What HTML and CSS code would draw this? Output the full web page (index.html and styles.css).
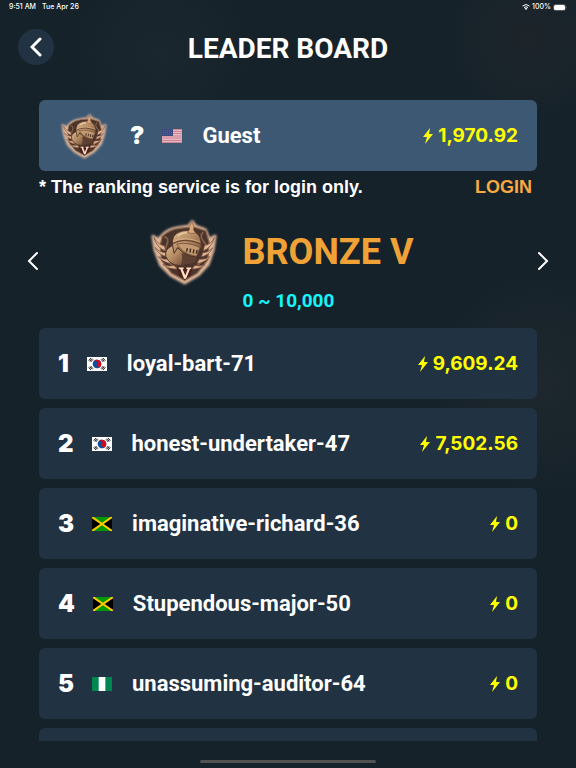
FILE: index.html
```html
<!DOCTYPE html>
<html lang="en">
<head>
    <meta charset="utf-8">
    <meta name="viewport" content="width=device-width, initial-scale=1">
    <title>Leader Board</title>
    <link rel="stylesheet" href="styles.css">
</head>
<body>
    <!-- shared icons -->
    <svg class="defs" width="0" height="0" aria-hidden="true">
        <defs>
            <linearGradient id="metal" x1="0" y1="0" x2="1" y2="1">
                <stop offset="0" stop-color="#d9b58b"/>
                <stop offset="0.5" stop-color="#b18760"/>
                <stop offset="1" stop-color="#6c4935"/>
            </linearGradient>
            <filter id="glow" x="-20%" y="-20%" width="140%" height="140%">
                <feGaussianBlur stdDeviation="4"/>
            </filter>
        </defs>
        <symbol id="badge" viewBox="20 34 212 204">
            <path d="M32 88L48 98 62 84Q80 66 112 62L140 58 151 44 161 58 190 68 202 98 220 88 214 130 200 172 170 205 128 230 86 206 55 175 38 130z" fill="#dcb498" stroke="#dcb498" stroke-width="9" stroke-linejoin="round" filter="url(#glow)"/>
            <path d="M60 88Q85 66 112 64L155 60 192 72 202 105 198 160 166 200 128 222 88 200 58 162 54 115z" fill="#4b342b" stroke="#8f6b53" stroke-width="4"/>
            <path d="M66 90Q80 92 76 108T64 132M184 76Q172 88 184 102T194 126M70 160Q90 178 104 184M188 156Q172 176 154 184" fill="none" stroke="#876047" stroke-width="5"/>
            <path d="M35 92Q42 122 70 133L67 118Q45 112 35 92zM38 122Q48 145 76 151L72 138Q51 137 38 122zM48 150Q62 168 88 171L82 158Q62 160 48 150zM62 174Q78 188 106 188L96 177Q78 181 62 174z" fill="#dfb38d" stroke="#70483a" stroke-width="2"/>
            <path d="M218 92Q211 122 184 133L188 116Q209 112 218 92zM213 123Q204 145 178 151L183 138Q202 137 213 123zM204 150Q191 168 165 171L172 158Q191 160 204 150zM190 174Q175 188 149 188L159 177Q175 181 190 174z" fill="#dfb38d" stroke="#70483a" stroke-width="2"/>
            <path d="M90 117Q66 128 71 150 80 170 100 175L120 178Q140 160 122 132z" fill="url(#metal)" stroke="#513527" stroke-width="3"/>
            <path d="M118 140Q124 160 116 176L139 172 160 168 164 150z" fill="#5e4132"/>
            <path d="M92 119Q84 82 118 73 151 64 169 83 180 97 178 122L165 151Q145 152 122 137L107 122 96 140z" fill="url(#metal)" stroke="#4d3226" stroke-width="3"/>
            <path d="M93 110Q127 91 178 112" fill="none" stroke="#6a4631" stroke-width="4"/>
            <path d="M94 105Q128 86 176 106" fill="none" stroke="#e2bd93" stroke-width="2"/>
            <path d="M104 112Q137 105 174 122L164 149Q142 147 122 132z" fill="#c39a70" stroke="#60402f" stroke-width="2"/>
            <path d="M136 124L134 135M146 126L144 138M156 128L154 140M166 130L163 141" stroke="#36231d" stroke-width="4"/>
            <path d="M109 86Q121 77 139 77" fill="none" stroke="#ebcaa0" stroke-width="5" stroke-linecap="round"/>
            <path d="M136 77L143 67 141 60 150 44 156 59 155 69 161 78Q149 83 136 77z" fill="#d8a77b" stroke="#795139" stroke-width="2"/>
            <path d="M104 184L152 184 146 207 128 221 111 207z" fill="#4d2020"/>
            <path d="M110 183H125V187L122 188 130 207 137 188 133 187V183H148V187L144 188 132 217H126L115 188 110 187z" fill="#ffe3c2"/>
        </symbol>
        <symbol id="bolt" viewBox="0 0 10 16">
            <path d="M7 0L0 9H4L2 16 10 6H6z" fill="#ff0"/>
        </symbol>
        <symbol id="flag-kr" viewBox="0 0 60 42">
            <path d="M0 0H60V42H0z" fill="#fff"/>
            <g transform="rotate(30 30 21)">
                <circle cx="30" cy="21" r="13" fill="#0b4ea2"/>
                <path d="M17 21a13 13 0 0 1 26 0a6 6 0 0 1-13 0a6 6 0 0 0-13 0z" fill="#d00c1a"/>
            </g>
            <path d="M5 11L12 3M8 13L15 5M11 15L18 7M45 5L52 13M42 7L49 15M48 3L55 11M5 31L12 39M8 29L15 37M11 27L18 35M42 35L49 27M45 37L52 29M48 39L55 31" stroke="#222" stroke-width="3"/>
        </symbol>
        <symbol id="flag-jm" viewBox="0 0 60 42">
            <path d="M0 0H60V42H0z" fill="#000"/>
            <path d="M0 0H60L30 21zM0 42H60L30 21z" fill="#090"/>
            <path d="M0 0L60 42M60 0L0 42" stroke="#fc0" stroke-width="6"/>
        </symbol>
        <symbol id="flag-ng" viewBox="0 0 60 42">
            <path d="M0 0H60V42H0z" fill="#008751"/>
            <path d="M20 0H40V42H20z" fill="#fff"/>
        </symbol>
        <symbol id="flag-us" viewBox="0 0 60 42">
            <path d="M0 0H60V42H0z" fill="#edc5cc"/>
            <path d="M0 2H60M0 8H60M0 14H60M0 21H60M0 27H60M0 34H60M0 40H60" stroke="#c97887" stroke-width="3"/>
            <path d="M0 0H33V21H0z" fill="#3d4c80"/>
            <path d="M3 4H32M3 10H32M3 16H32" stroke="#7782a8" stroke-width="2" stroke-dasharray="2 4"/>
        </symbol>
    </svg>

    <div class="screen">
        <div class="status">
            <span>9:51 AM</span>
            <span>Tue Apr 26</span>
            <div class="status-right">
                <svg width="8" height="6" viewBox="0 0 16 12" aria-hidden="true">
                    <path d="M1 4Q8 -2 15 4M4 7Q8 4 12 7" fill="none" stroke="#fff" stroke-width="2"/>
                    <path d="M5 9Q8 7 11 9L8 12z" fill="#fff"/>
                </svg>
                <span>100%</span>
                <svg width="14" height="7" viewBox="0 0 28 14" aria-hidden="true">
                    <rect x="1" y="1" width="24" height="12" rx="4" fill="none" stroke="#8b9195" stroke-width="1"/>
                    <rect x="2" y="2" width="22" height="10" rx="3" fill="#fff"/>
                    <path d="M26 5Q28 7 26 9z" fill="#8b9195"/>
                </svg>
            </div>
        </div>

        <header class="header">
            <button class="back" type="button" aria-label="Back">
                <svg width="12" height="20" viewBox="0 0 12 20"><path d="M10 2L2 10 10 18"/></svg>
            </button>
            <h1>LEADER BOARD</h1>
        </header>

        <main class="main">
            <section class="row me">
                <svg class="me-badge" aria-hidden="true"><use href="#badge"/></svg>
                <span class="rank">?</span>
                <svg class="flag" aria-hidden="true"><use href="#flag-us"/></svg>
                <span class="name">Guest</span>
                <span class="score"><svg class="bolt" aria-hidden="true"><use href="#bolt"/></svg>1,970.92</span>
            </section>

            <div class="notice">
                <p>* The ranking service is for login only.</p>
                <a href="#login">LOGIN</a>
            </div>

            <section class="tier">
                <button class="arrow" type="button" aria-label="Previous tier">
                    <svg width="12" height="20" viewBox="0 0 12 20"><path d="M10 2L2 10 10 18"/></svg>
                </button>
                <div class="tier-info">
                    <svg class="tier-badge" aria-hidden="true"><use href="#badge"/></svg>
                    <h2>BRONZE V</h2>
                    <p>0 ~ 10,000</p>
                </div>
                <button class="arrow" type="button" aria-label="Next tier">
                    <svg width="12" height="20" viewBox="0 0 12 20"><path d="M2 2L10 10 2 18"/></svg>
                </button>
            </section>

            <ol class="list">
                <li class="row">
                    <span class="rank">1</span>
                    <svg class="flag" aria-hidden="true"><use href="#flag-kr"/></svg>
                    <span class="name">loyal-bart-71</span>
                    <span class="score"><svg class="bolt" aria-hidden="true"><use href="#bolt"/></svg>9,609.24</span>
                </li>
                <li class="row">
                    <span class="rank">2</span>
                    <svg class="flag" aria-hidden="true"><use href="#flag-kr"/></svg>
                    <span class="name">honest-undertaker-47</span>
                    <span class="score"><svg class="bolt" aria-hidden="true"><use href="#bolt"/></svg>7,502.56</span>
                </li>
                <li class="row">
                    <span class="rank">3</span>
                    <svg class="flag" aria-hidden="true"><use href="#flag-jm"/></svg>
                    <span class="name">imaginative-richard-36</span>
                    <span class="score"><svg class="bolt" aria-hidden="true"><use href="#bolt"/></svg>0</span>
                </li>
                <li class="row">
                    <span class="rank">4</span>
                    <svg class="flag" aria-hidden="true"><use href="#flag-jm"/></svg>
                    <span class="name">Stupendous-major-50</span>
                    <span class="score"><svg class="bolt" aria-hidden="true"><use href="#bolt"/></svg>0</span>
                </li>
                <li class="row">
                    <span class="rank">5</span>
                    <svg class="flag" aria-hidden="true"><use href="#flag-ng"/></svg>
                    <span class="name">unassuming-auditor-64</span>
                    <span class="score"><svg class="bolt" aria-hidden="true"><use href="#bolt"/></svg>0</span>
                </li>
                <li class="row"></li>
            </ol>
        </main>

        <div class="home-bar"></div>
    </div>
</body>
</html>
```
FILE: styles.css
```css
* {
    margin: 0;
    padding: 0;
    box-sizing: border-box;
}
body {
    background: #16222a;
    color: #fff;
    font-family: Roboto, sans-serif;
}
button {
    background: none;
    border: 0;
    cursor: pointer;
}
.defs {
    position: absolute;
}
.screen {
    height: 100vh;
    display: flex;
    flex-direction: column;
    overflow: hidden;
    background:
        radial-gradient(circle at 92% 5%, rgba(60, 48, 46, 0.2), transparent 80px),
        radial-gradient(circle at 94% 50%, rgba(60, 62, 60, 0.2), transparent 110px),
        radial-gradient(circle at 28% 7%, rgba(44, 60, 66, 0.2), transparent 90px);
}

/* status bar */
.status {
    display: flex;
    align-items: center;
    gap: 6px;
    height: 14px;
    padding: 0 9px;
    font: 500 7px/14px Inter, sans-serif;
}
.status-right {
    display: flex;
    align-items: center;
    gap: 2px;
    margin-left: auto;
}

/* header */
.header {
    display: grid;
    grid-template-columns: 36px 1fr 36px;
    align-items: center;
    height: 66px;
    padding: 0 18px;
}
.header h1 {
    padding-top: 4px;
    font-size: 28px;
    line-height: 32px;
    text-align: center;
}
.back {
    display: flex;
    align-items: center;
    justify-content: center;
    width: 36px;
    height: 36px;
    border-radius: 50%;
    background: #213243;
}
.back path,
.arrow path {
    fill: none;
    stroke: #fff;
    stroke-width: 2;
    stroke-linecap: round;
}
.back path {
    stroke-width: 3;
}

.main {
    flex: 1;
    min-height: 0;
    display: flex;
    flex-direction: column;
    padding: 20px 39px 0;
}

/* player rows */
.row {
    flex: none;
    display: flex;
    align-items: center;
    height: 71px;
    padding: 0 19px;
    border-radius: 6px;
    background: #213242;
}
.me {
    background: #3d5873;
}
.me-badge {
    width: 48px;
    height: 48px;
    margin: 0 22px 0 2px;
}
.rank {
    font: 900 24px/28px Inter, sans-serif;
}
.flag {
    width: 20px;
    height: 14px;
    margin: 0 20px 0 18px;
}
.name {
    font-size: 22px;
    font-weight: 700;
}
.score {
    display: flex;
    align-items: center;
    gap: 5px;
    margin-left: auto;
    color: #ff0;
    font: 700 19px/28px Inter, sans-serif;
}
.bolt {
    width: 10px;
    height: 16px;
}

.notice {
    display: flex;
    justify-content: space-between;
    height: 32px;
    padding-right: 5px;
    font: 700 18px/32px "Liberation Sans", sans-serif;
}
.notice a {
    color: #f9a843;
    text-decoration: none;
}

/* tier switcher */
.tier {
    display: flex;
    align-items: center;
    justify-content: space-between;
    height: 125px;
    margin: 0 -12px;
}
.arrow {
    display: flex;
    padding-bottom: 10px;
}
.tier-info {
    display: grid;
    grid-template-columns: auto auto;
    column-gap: 24px;
    align-items: center;
    margin-right: 14px;
}
.tier-badge {
    width: 70px;
    height: 70px;
}
.tier-info h2 {
    color: #f0a236;
    font-size: 36px;
    line-height: 70px;
}
.tier-info p {
    grid-column: 2;
    color: #14f6fc;
    font-size: 19px;
    font-weight: 700;
    line-height: 28px;
}

.list {
    flex: 1;
    min-height: 0;
    display: flex;
    flex-direction: column;
    gap: 9px;
    overflow: hidden;
    list-style: none;
}

.home-bar {
    align-self: center;
    width: 176px;
    height: 3px;
    margin: 19px 0 5px;
    border-radius: 2px;
    background: #515252;
}
```
